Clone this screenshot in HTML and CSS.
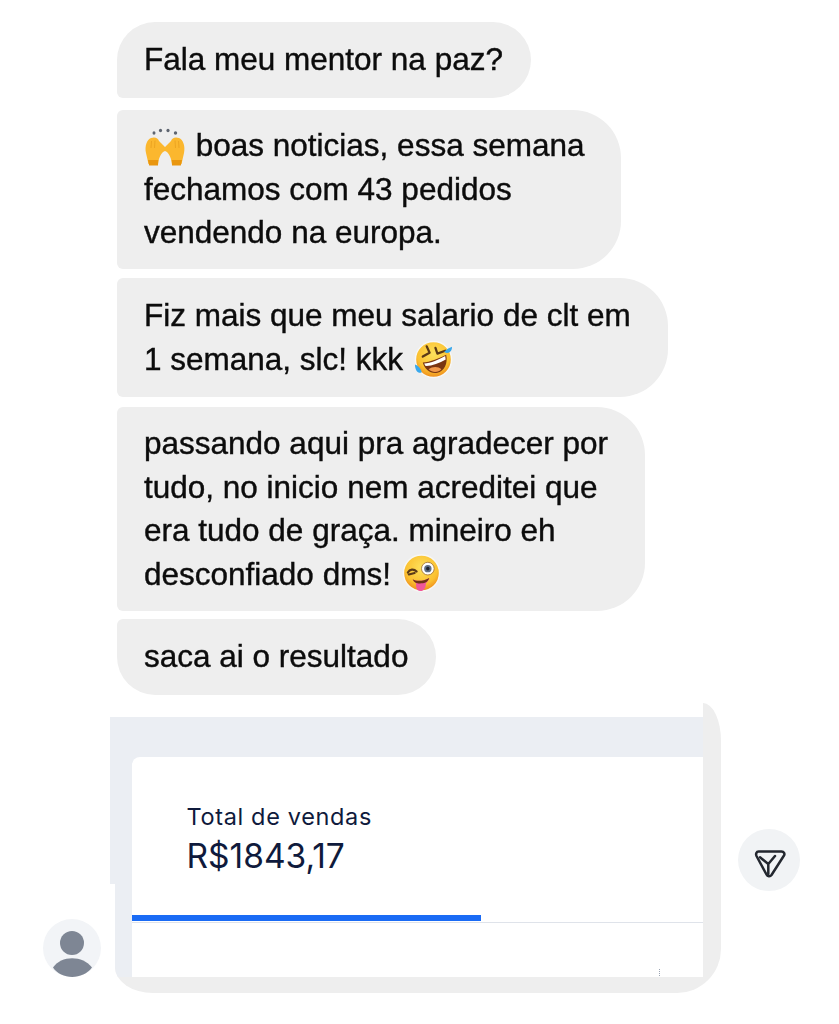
FILE: index.html
```html
<!DOCTYPE html>
<html lang="pt-BR">
<head>
    <meta charset="UTF-8">
    <meta name="viewport" content="width=device-width, initial-scale=1.0">
    <title>Conversa</title>
    <link rel="stylesheet" href="styles.css">
</head>
<body>
    <!-- Messages -->
    <div class="messages">
        <div class="bubble bubble-first">Fala meu mentor na paz?</div>
        <div class="bubble bubble-three">
            <svg class="emoji emoji-hands" viewBox="0 0 42 40">
                <g fill="#5d6470">
                    <ellipse cx="10" cy="5" rx="1.500" ry="1.800"/>
                    <ellipse cx="16.500" cy="2.500" rx="1.600" ry="1.800"/>
                    <ellipse cx="24" cy="2.500" rx="1.600" ry="1.800"/>
                    <ellipse cx="31.500" cy="5" rx="1.700" ry="1.800"/>
                </g>
                <g id="hand">
                    <path d="M4.500 36 L2 25 C0.500 18 3 11.500 7 10 C11 8.500 14 10 15 13 L21 19 L21 23 C18 24 15 28 14 36 Z" fill="#fbb72e"/>
                    <path d="M7.500 13 L7 20 M11 12.500 L10.500 20" fill="none" stroke="#e9a01e" stroke-width="0.800"/>
                    <path d="M4 32 H14.300 L14 37.500 H5.200 Z" fill="#e9960f"/>
                </g>
                <use href="#hand" transform="matrix(-1 0 0 1 42 0)"/>
            </svg>
            boas noticias, essa semana<br>fechamos com 43 pedidos<br>vendendo na europa.
        </div>
        <div class="bubble bubble-two">
            Fiz mais que meu salario de clt em<br>1 semana, slc! kkk
            <svg class="emoji emoji-rofl" viewBox="0 0 40 40">
                <defs>
                    <radialGradient id="faceFill" cx="50%" cy="35%" r="65%">
                        <stop offset="0" stop-color="#fde15c"/>
                        <stop offset="0.7" stop-color="#fbc02f"/>
                        <stop offset="1" stop-color="#ee8a1c"/>
                    </radialGradient>
                </defs>
                <circle cx="20" cy="20" r="18.500" fill="url(#faceFill)" stroke="#f7f7f5" stroke-width="1.500"/>
                <path d="M9 17 L16 13 L13 6.500 M22 8 L24 14 L32 11" fill="none" stroke="#5b3a17" stroke-width="2.300" stroke-linecap="round" stroke-linejoin="round"/>
                <path d="M9 23 C16 23 27 18 33 15 C35 24 31 32 24 33.500 C17 35 11 30 9 23 Z" fill="#7a3512"/>
                <path d="M10.500 24 C17 24 26 20 32 16.500 L32.500 20 C26 24 17 27 11.500 26.500 Z" fill="#fff"/>
                <path d="M15 30 C19 27 25 27 28 30 C25 33.500 19 34 15 30 Z" fill="#f2994a"/>
                <path d="M1 25 C4 26 7 29 8 33 C5 35 1 32 1 25 Z" fill="#39a8ec"/>
                <path d="M39 7 C36 8 33 10 31 12 C34 15 39 13 39 7 Z" fill="#39a8ec"/>
            </svg>
        </div>
        <div class="bubble bubble-four">
            passando aqui pra agradecer por<br>tudo, no inicio nem acreditei que<br>era tudo de graça. mineiro eh<br>desconfiado dms!
            <svg class="emoji emoji-wink" viewBox="0 0 40 40">
                <circle cx="20" cy="19.500" r="18.500" fill="url(#faceFill)" stroke="#f7f7f5" stroke-width="1.500"/>
                <path d="M6 19 C8 15.500 12 15 15 18 M7 21 L13 19.500" fill="none" stroke="#5b3a17" stroke-width="2.200" stroke-linecap="round"/>
                <circle cx="26.500" cy="15" r="6.500" fill="#fff" stroke="#9a6a2c" stroke-width="0.800"/>
                <circle cx="26.500" cy="15" r="3.800" fill="#5f6f86"/>
                <circle cx="26.500" cy="15" r="1.800" fill="#20242c"/>
                <path d="M11 26 C15 28.500 22 28 28 24.500 C27 27.500 25.500 29 24.500 30 C24.500 35 22 38.500 18.500 38 C15 37.500 14 34 14.500 30 C13 29 12 28 11 26 Z" fill="#f0569a"/>
                <path d="M11 26 C15 28.500 22 28 28 24.500 C27 27 25.500 28.500 24 29.300 C21 30.500 16 30.500 14 29.500 C12.500 28.800 11.500 27.500 11 26 Z" fill="#6d3213"/>
            </svg>
        </div>
        <div class="bubble bubble-last">saca ai o resultado</div>
    </div>

    <!-- Sales card -->
    <div class="sale-row">
        <div class="avatar">
            <svg viewBox="0 0 58 58" width="58" height="58">
                <circle cx="29" cy="29" r="29" fill="#f2f4f7"/>
                <circle cx="29" cy="24" r="12" fill="#7e8694"/>
                <path d="M10 48.500 C18 36 40 36 49 48.500 C40 61 18 61 10 48.500 Z" fill="#7e8694"/>
            </svg>
        </div>
        <div class="frame-tab"></div>
        <div class="frame">
            <div class="frame-cap"></div>
            <div class="panel">
                <div class="card">
                    <div class="card-info">
                        <div class="card-label">Total de vendas</div>
                        <div class="card-value">R$1843,17</div>
                    </div>
                    <div class="progress">
                        <div class="progress-fill" style="width: 349px"></div>
                    </div>
                    <div class="card-foot"><span class="card-dots"></span></div>
                </div>
            </div>
        </div>
        <div class="send">
            <svg viewBox="0 0 62 62" width="62" height="62">
                <circle cx="31" cy="31" r="31" fill="#f1f3f5"/>
                <path d="M20.500 22.500 H43.500 C46 22.500 47 25 46 26.500 L33.500 46 C32 48 29.500 47.500 28.500 45.500 L18.500 27 C17.500 25 18.500 22.500 20.500 22.500 Z" fill="none" stroke="#23272f" stroke-width="2.500" stroke-linejoin="round"/>
                <path d="M22 28.300 L30.300 35 L37 27 M30.300 35 V45" fill="none" stroke="#23272f" stroke-width="2.500" stroke-linecap="round" stroke-linejoin="round"/>
            </svg>
        </div>
    </div>
</body>
</html>
```

FILE: styles.css
```css
body {
    margin: 0;
    background-color: #fff;
    font-family: "Liberation Sans", Arial, sans-serif;
}

/* Messages */
.messages {
    display: flex;
    flex-direction: column;
    align-items: flex-start;
    padding: 22px 0 0 117px;
}

.bubble {
    background-color: #eeeeee;
    color: #0c0c0c;
    font-size: 31.5px;
    line-height: 43.5px;
    padding-left: 27px;
    padding-right: 37px;
    border-radius: 6px 48px 48px 6px;
    -webkit-text-stroke: 0.4px #0c0c0c;
    filter: blur(0.5px);
}

.bubble-first {
    padding-top: 16px;
    padding-bottom: 16.5px;
    padding-right: 28px;
    margin-bottom: 12px;
    border-radius: 38px 38px 38px 6px;
}

.bubble-three {
    padding-top: 14px;
    padding-bottom: 14.5px;
    margin-bottom: 9px;
}

.bubble-two {
    padding-top: 16px;
    padding-bottom: 16px;
    margin-bottom: 10px;
}

.bubble-four {
    padding-top: 15px;
    padding-bottom: 15px;
    margin-bottom: 8px;
}

.bubble-last {
    padding-top: 16px;
    padding-bottom: 16.5px;
    padding-right: 28px;
    margin-bottom: 8px;
    border-radius: 6px 38px 38px 38px;
}

.emoji {
    vertical-align: middle;
    margin: -8px 0;
}

.emoji-hands {
    width: 42px;
    height: 40px;
    margin-right: 1px;
}

.emoji-rofl {
    width: 39px;
    height: 39px;
    margin: -10px 0 -6px 2px;
}

.emoji-wink {
    width: 39px;
    height: 39px;
    margin: -11px 0 -5px 2px;
}

/* Sales card */
.sale-row {
    display: flex;
    align-items: flex-start;
    padding-left: 43px;
}

.avatar {
    width: 58px;
    height: 58px;
    margin: 216px 9px 0 0;
}

.frame-tab {
    width: 5px;
    height: 167px;
    margin-top: 14px;
    background-color: #ebeef3;
}

.frame {
    width: 606px;
    background-color: #eeeeee;
    padding: 0 18px 16px 0;
    box-sizing: border-box;
    overflow: hidden;
    border-radius: 0 18px 44px 38px / 0 38px 44px 26px;
}

.frame-cap {
    height: 14px;
    background-color: #fff;
}

.panel {
    background-color: #ebeef3;
    padding: 40px 0 0 17px;
}

.card {
    background-color: #fff;
    border-radius: 8px 0 0 0;
    height: 220px;
    color: #0f1a3c;
}

.card-info {
    height: 158px;
    padding: 45px 0 0 54.5px;
    box-sizing: border-box;
    font-family: Inter, sans-serif;
}

.card-label {
    font-size: 23.5px;
    line-height: 30px;
    letter-spacing: 0.65px;
}

.card-value {
    font-size: 33.5px;
    line-height: 48px;
}

.progress {
    height: 7px;
    border-bottom: 1px solid #dfe3ea;
}

.progress-fill {
    height: 6px;
    background-color: #1a6bf5;
}

.card-foot {
    display: flex;
    justify-content: flex-end;
    padding: 46px 43px 0 0;
}

.card-dots {
    width: 0;
    height: 7px;
    border-left: 1px dotted #9aa3b2;
}

.send {
    width: 62px;
    height: 62px;
    margin: 126px 0 0 17px;
}
```
